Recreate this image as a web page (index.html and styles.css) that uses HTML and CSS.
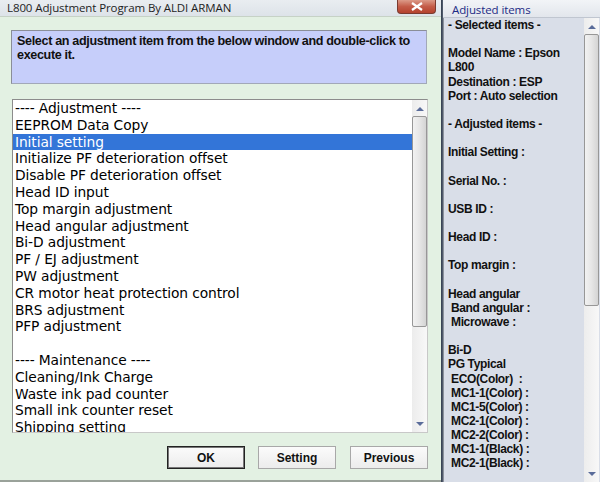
FILE: index.html
```html
<!DOCTYPE html>
<html>
<head>
<meta charset="utf-8">
<link rel="stylesheet" href="styles.css">
</head>
<body>
<div class="screen">
  <div class="win-left">
    <div class="titlebar">
      <span class="title">L800 Adjustment Program By ALDI ARMAN</span>
      <div class="close"><svg width="14" height="9" viewBox="0 0 14 9"><path d="M2 1 L12 8 M12 1 L2 8" stroke="#fff" stroke-width="2.2" fill="none"/></svg></div>
    </div>
    <div class="client">
      <div class="info">Select an adjustment item from the below window and double-click to execute it.</div>
      <div class="listbox">
        <div class="items">
          <div class="item">---- Adjustment ----</div>
          <div class="item">EEPROM Data Copy</div>
          <div class="item sel">Initial setting</div>
          <div class="item">Initialize PF deterioration offset</div>
          <div class="item">Disable PF deterioration offset</div>
          <div class="item">Head ID input</div>
          <div class="item">Top margin adjustment</div>
          <div class="item">Head angular adjustment</div>
          <div class="item">Bi-D adjustment</div>
          <div class="item">PF / EJ adjustment</div>
          <div class="item">PW adjustment</div>
          <div class="item">CR motor heat protection control</div>
          <div class="item">BRS adjustment</div>
          <div class="item">PFP adjustment</div>
          <div class="item">&nbsp;</div>
          <div class="item">---- Maintenance ----</div>
          <div class="item">Cleaning/Ink Charge</div>
          <div class="item">Waste ink pad counter</div>
          <div class="item">Small ink counter reset</div>
          <div class="item">Shipping setting</div>
        </div>
        <div class="vscroll">
          <div class="arrow up"><svg width="8" height="5" viewBox="0 0 8 5"><path d="M0 5 L4 1 L8 5 Z" fill="#5a6c9a"/></svg></div>
          <div class="track"><div class="thumb thumb-l"></div></div>
          <div class="arrow down"><svg width="8" height="5" viewBox="0 0 8 5"><path d="M0 0 L4 4 L8 0 Z" fill="#5a6c9a"/></svg></div>
        </div>
      </div>
      <div class="buttons">
        <div class="btn default">OK</div>
        <div class="btn">Setting</div>
        <div class="btn">Previous</div>
      </div>
    </div>
  </div>
  <div class="divider"></div>
  <div class="win-right">
    <div class="titlebar-r"><span class="title-r">Adjusted items</span></div>
    <div class="panel">
      <div class="lines">
        <div class="ln">- Selected items -</div>
        <div class="ln">&nbsp;</div>
        <div class="ln">Model Name : Epson</div>
        <div class="ln">L800</div>
        <div class="ln">Destination : ESP</div>
        <div class="ln">Port : Auto selection</div>
        <div class="ln">&nbsp;</div>
        <div class="ln">- Adjusted items -</div>
        <div class="ln">&nbsp;</div>
        <div class="ln">Initial Setting :</div>
        <div class="ln">&nbsp;</div>
        <div class="ln">Serial No. :</div>
        <div class="ln">&nbsp;</div>
        <div class="ln">USB ID :</div>
        <div class="ln">&nbsp;</div>
        <div class="ln">Head ID :</div>
        <div class="ln">&nbsp;</div>
        <div class="ln">Top margin :</div>
        <div class="ln">&nbsp;</div>
        <div class="ln">Head angular</div>
        <div class="ln"> Band angular :</div>
        <div class="ln"> Microwave :</div>
        <div class="ln">&nbsp;</div>
        <div class="ln">Bi-D</div>
        <div class="ln">PG Typical</div>
        <div class="ln"> ECO(Color)  :</div>
        <div class="ln"> MC1-1(Color) :</div>
        <div class="ln"> MC1-5(Color) :</div>
        <div class="ln"> MC2-1(Color) :</div>
        <div class="ln"> MC2-2(Color) :</div>
        <div class="ln"> MC1-1(Black) :</div>
        <div class="ln"> MC2-1(Black) :</div>
      </div>
      <div class="vscroll vscroll-r">
        <div class="arrow up"><svg width="8" height="5" viewBox="0 0 8 5"><path d="M0 5 L4 1 L8 5 Z" fill="#5a6c9a"/></svg></div>
        <div class="track"><div class="thumb thumb-r"></div></div>
        <div class="arrow down"><svg width="8" height="5" viewBox="0 0 8 5"><path d="M0 0 L4 4 L8 0 Z" fill="#5a6c9a"/></svg></div>
      </div>
    </div>
  </div>
</div>
</body>
</html>
```
FILE: styles.css
```css
* { box-sizing: border-box; }
html, body { margin: 0; padding: 0; }
body { width: 600px; height: 482px; overflow: hidden; background: #e3f0e3; }
.screen { display: flex; width: 600px; height: 482px; }

.win-left { width: 441px; display: flex; flex-direction: column; }
.titlebar {
  height: 17px; display: flex; align-items: flex-start;
  background: linear-gradient(#e9edf1, #dde3e9);
  border-bottom: 1px solid #c6d2c6;
}
.title {
  font-family: "Open Sans", "Noto Sans", sans-serif; font-size: 11.5px; color: #1e1e1e;
  padding-left: 7px; line-height: 16px; letter-spacing: -0.1px;
}
.close {
  margin-left: auto; margin-right: 5px; width: 39px; height: 14px;
  background: linear-gradient(#dc9a88, #c45c48 50%, #b4422e);
  border: 1px solid #7a3a30; border-top: none; border-radius: 0 0 4px 4px;
  display: flex; align-items: center; justify-content: center;
}
.client { flex: 1; background: #e3f1e3; padding: 13px 0 0 11px; border-bottom: 2px solid #9aa29a; }
.info {
  width: 416px; height: 54px; background: #c6cefa;
  border: 1px solid #a2a8b8; border-top-color: #8a8e98; border-left-color: #8a8e98;
  font-family: "Liberation Sans", Arial, sans-serif; font-weight: bold; font-size: 12.6px;
  line-height: 14px; padding: 3px 2px 3px 5px; color: #111; letter-spacing: -0.35px;
}
.listbox {
  margin: 15px 0 0 1px; width: 416px; height: 334px; background: #fff;
  border: 1px solid #8c8c8c; border-right-color: #c8c8c8; border-bottom-color: #c8c8c8;
  display: flex; overflow: hidden;
}
.items { flex: 1; overflow: hidden; }
.item {
  font-family: "DejaVu Sans", Verdana, sans-serif; font-size: 13.8px; line-height: 16.8px; height: 16.8px;
  padding-left: 2px; color: #000; white-space: nowrap; letter-spacing: -0.1px;
}
.item.sel { background: #3375d8; color: #fff; }
.vscroll { width: 15px; display: flex; flex-direction: column; background: linear-gradient(90deg, #ececec, #f8f8f8); }
.arrow { height: 16px; display: flex; align-items: center; justify-content: center; }
.track { flex: 1; }
.thumb {
  width: 15px; border: 1px solid #979797; border-radius: 2px;
  background: linear-gradient(90deg, #f2f2f2, #e6e6e6 50%, #d4d4d4);
}
.thumb-l { height: 211px; }
.buttons { display: flex; margin-top: 13px; padding-left: 156px; }
.btn {
  width: 78px; height: 23px; margin-right: 13px;
  border: 1px solid #a8a8a8; background: linear-gradient(#fbfbfb, #ececec);
  font-family: "Liberation Sans", Arial, sans-serif; font-weight: bold; font-size: 12px;
  display: flex; align-items: center; justify-content: center; color: #111;
}
.btn.default { border: 1px solid #222; box-shadow: inset 0 0 0 1px #777; }
.btn:nth-child(2) { margin-right: 14px; }

.divider { width: 2px; background: linear-gradient(90deg, #2f3a4a, #5a6577); }
.win-right { flex: 1; display: flex; flex-direction: column; background: #dadfe8; }
.titlebar-r { height: 18px; background: linear-gradient(#f2f4f7, #e2e6ec); border-bottom: 1px solid #c0c6d0; }
.title-r {
  font-family: "Open Sans", "Noto Sans", sans-serif; font-size: 11.5px; color: #1c2a84;
  padding-left: 9px; line-height: 16px; letter-spacing: -0.1px;
}
.panel { flex: 1; display: flex; border-left: 1px solid #8c929c; background: #d9dee8; }
.lines { flex: 1; padding: 0 0 0 4px; overflow: hidden; }
.ln {
  font-family: "Liberation Sans", Arial, sans-serif; font-weight: bold; font-size: 12px;
  line-height: 14.15px; height: 14.15px; white-space: pre; color: #111; letter-spacing: -0.35px;
}
.vscroll-r { width: 15px; margin-right: 1px; background: linear-gradient(90deg, #ededed, #f8f8f8); }
.thumb-r { height: 272px; }
```
